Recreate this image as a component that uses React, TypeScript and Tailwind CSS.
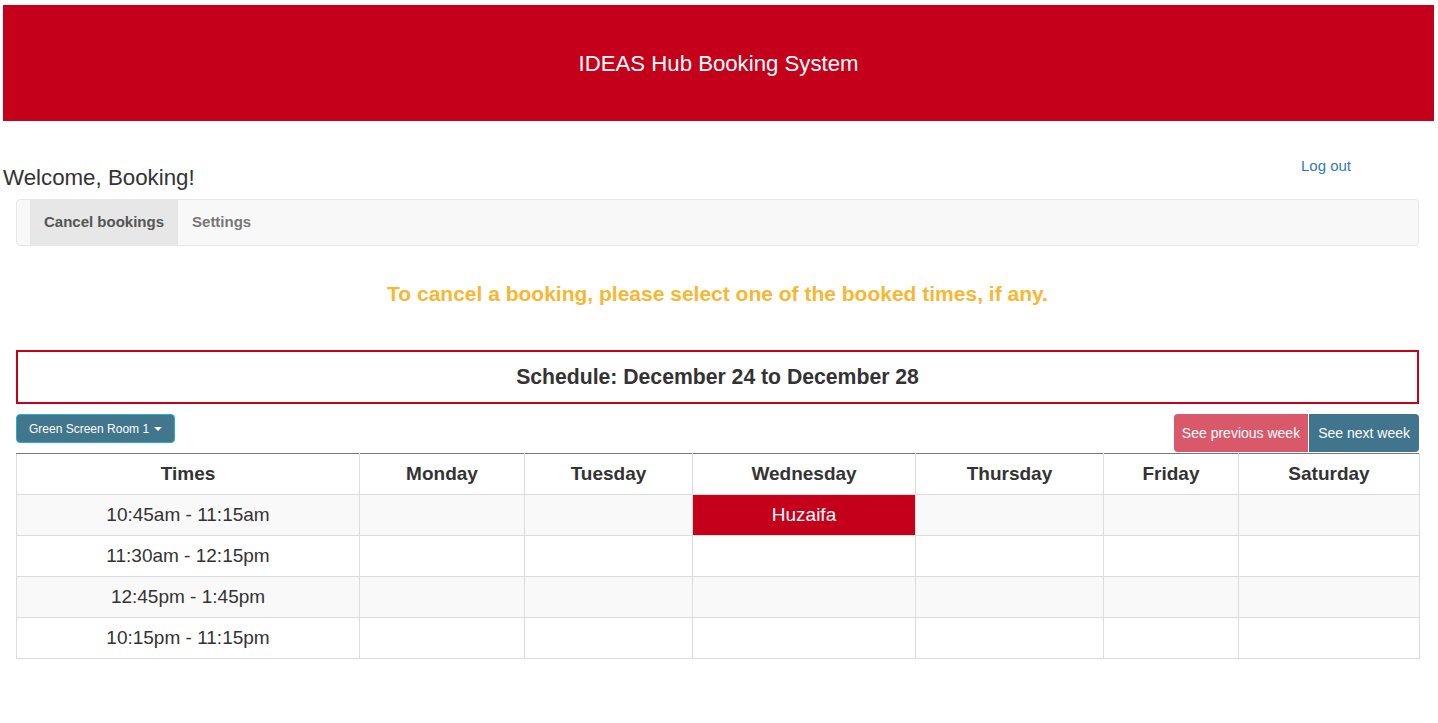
import React from 'react';

const days = ['Monday', 'Tuesday', 'Wednesday', 'Thursday', 'Friday', 'Saturday'];
const widths = ['w-[343px]', 'w-[165px]', 'w-[168px]', 'w-[223px]', 'w-[188px]', 'w-[135px]', 'w-[181px]'];

type Row = { time: string; bookings: Record<string, string> };

const rows: Row[] = [
  { time: '10:45am - 11:15am', bookings: { Wednesday: 'Huzaifa' } },
  { time: '11:30am - 12:15pm', bookings: {} },
  { time: '12:45pm - 1:45pm', bookings: {} },
  { time: '10:15pm - 11:15pm', bookings: {} },
];

export default function App() {
  return (
    <div className="min-h-screen bg-white pl-[3px] pr-[4px] pt-[5px] font-['Liberation_Sans',Arial,sans-serif] text-[#333]">
      <header className="h-[116px] bg-[#c4001a] flex items-center justify-center pt-[2px]">
        <h1 className="text-white text-[22.2px]">IDEAS Hub Booking System</h1>
      </header>

      <div className="flex justify-between">
        <h3 className="text-[22.3px] mt-[44px] leading-[26px]">Welcome, Booking!</h3>
        <a href="#" className="text-[#337ab7] text-[15px] mt-[34px] mr-[83px]">
          Log out
        </a>
      </div>

      <div className="ml-[13px] w-[1403px]">
        <nav className="mt-[8px] h-[47px] border border-[#e7e7e7] bg-[#f8f8f8] rounded flex pl-[13px]">
          <a href="#" className="bg-[#e7e7e7] px-[14px] flex items-center text-[15px] font-bold text-[#555]">
            Cancel bookings
          </a>
          <a href="#" className="px-[14px] flex items-center text-[15px] font-bold text-[#777]">
            Settings
          </a>
        </nav>

        <p className="mt-[33px] leading-[30px] text-center text-[21px] font-bold text-[#f7b733]">
          To cancel a booking, please select one of the booked times, if any.
        </p>

        <div className="mt-[41px] h-[54px] border-2 border-[#c4001a] flex items-center justify-center">
          <h2 className="text-[21.2px] font-bold">Schedule: December 24 to December 28</h2>
        </div>

        <div className="mt-[10px] flex justify-between items-start">
          <button className="h-[29px] px-[12px] rounded bg-[#41768c] border border-[#1fb2d6] text-white text-[12px] flex items-center gap-[4px]">
            Green Screen Room 1
            <span className="inline-block w-0 h-0 border-l-[4px] border-r-[4px] border-t-[4px] border-l-transparent border-r-transparent border-t-white ml-[1px]" />
          </button>
          <div className="flex">
            <button className="h-[38px] px-[8px] rounded-l bg-[#d9596a] text-white text-[14px]">See previous week</button>
            <button className="h-[38px] px-[9px] rounded-r bg-[#41758d] text-white text-[14px] ml-px">See next week</button>
          </div>
        </div>

        <table className="mt-px w-[1403px] border-collapse table-fixed text-[19px]">
          <thead>
            <tr className="h-[41px]">
              <th className={`${widths[0]} border border-[#ddd] border-t-[#777] font-bold`}>Times</th>
              {days.map((d, i) => (
                <th key={d} className={`${widths[i + 1]} border border-[#ddd] border-t-[#777] font-bold`}>
                  {d}
                </th>
              ))}
            </tr>
          </thead>
          <tbody>
            {rows.map((r, ri) => (
              <tr key={r.time} className={`h-[41px] ${ri % 2 === 0 ? 'bg-[#f9f9f9]' : 'bg-white'}`}>
                <td className="border border-[#ddd] text-center">{r.time}</td>
                {days.map((d) =>
                  r.bookings[d] ? (
                    <td key={d} className="border border-[#ddd] bg-[#c4001a] text-white text-center">
                      {r.bookings[d]}
                    </td>
                  ) : (
                    <td key={d} className="border border-[#ddd]" />
                  )
                )}
              </tr>
            ))}
          </tbody>
        </table>
      </div>
    </div>
  );
}
